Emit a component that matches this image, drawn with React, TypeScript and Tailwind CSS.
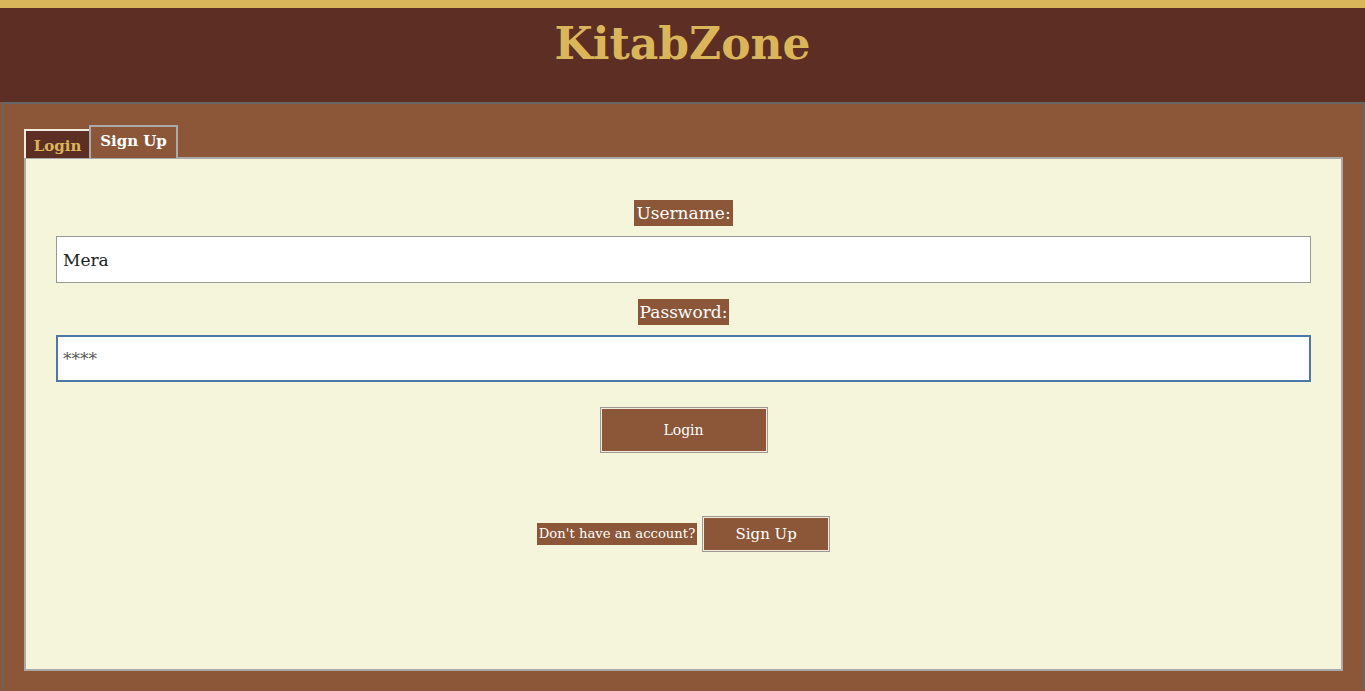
import React from "react";

export default function App() {
  return (
    <div className="min-h-[691px] bg-[#8b5738] font-['DejaVu_Serif',serif]">
      <div className="h-[8px] bg-[#d9b65a]" />
      <header className="h-[94px] bg-[#5c2e24] flex justify-center">
        <h1 className="mt-[10px] text-[44px] leading-[52px] font-bold text-[#d9b65a]">KitabZone</h1>
      </header>
      <main className="ml-[2px] border-2 border-[#666] border-b-0 bg-[#8b5738] px-[20px] pt-[21px] pb-[18px]">
        <div className="flex items-end">
          <button className="h-[29px] w-[65px] bg-[#5c2e24] border-t-2 border-l-2 border-[#f0ece0] text-[#d9b65a] font-bold text-[15px] pt-[3px]">
            Login
          </button>
          <button className="h-[33px] w-[89px] bg-[#8b5738] border-2 border-b-0 border-[#aaa] text-white font-bold text-[15px] pb-[2px]">
            Sign Up
          </button>
        </div>
        <section className="h-[514px] border-2 border-[#aaa] -mt-px bg-[#f5f5dc] px-[30px] pt-[41px] flex flex-col items-center">
          <label className="bg-[#8b5738] text-white text-[17px] leading-[26px] px-[2px]">Username:</label>
          <input
            className="mt-[10px] w-full h-[47px] bg-white border border-[#999] px-[6px] text-[17px] text-[#222] outline-none"
            defaultValue="Mera"
          />
          <label className="mt-[16px] bg-[#8b5738] text-white text-[17px] leading-[26px] px-[2px]">Password:</label>
          <input
            className="mt-[10px] w-full h-[47px] bg-white border-2 border-[#4a78a8] px-[5px] text-[17px] text-[#555] outline-none"
            defaultValue="****"
          />
          <button className="mt-[25px] w-[168px] h-[46px] bg-[#8b5738] border border-[#a09890] shadow-[inset_0_0_0_1px_#f0ece0] text-white text-[14px]">
            Login
          </button>
          <div className="mt-[63px] flex items-center gap-[5px]">
            <span className="bg-[#8b5738] text-white text-[13.2px] leading-[22px] px-[2px]">Don&apos;t have an account?</span>
            <button className="w-[128px] h-[36px] bg-[#8b5738] border border-[#a09890] shadow-[inset_0_0_0_1px_#f0ece0] text-white text-[15px]">
              Sign Up
            </button>
          </div>
        </section>
      </main>
    </div>
  );
}
